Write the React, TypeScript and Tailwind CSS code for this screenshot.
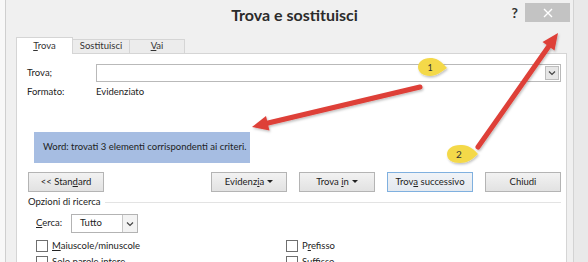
import React from "react";

const font = { fontFamily: "Lato, 'Noto Sans', sans-serif" };

function Btn({ children, w = "w-[76px]", primary }: { children: React.ReactNode; w?: string; primary?: boolean }) {
  return (
    <div
      className={
        w +
        " shrink-0 h-[20px] flex items-center justify-center text-[9.5px] text-[#222] border " +
        (primary
          ? "border-[#7fb0df] bg-gradient-to-b from-[#f0f3f7] to-[#e4e9ef]"
          : "border-[#b4b4b4] bg-gradient-to-b from-[#f2f2f2] to-[#e2e2e2]")
      }
    >
      <span className="whitespace-pre">{children}</span>
    </div>
  );
}

function Caret() {
  return <span className="ml-[3px] mb-[1px] inline-block align-middle w-0 h-0 border-l-[3px] border-r-[3px] border-t-[3px] border-l-transparent border-r-transparent border-t-[#222]" />;
}

function Check({ children }: { children: React.ReactNode }) {
  return (
    <div className="flex items-center gap-[4px] h-[16px]">
      <div className="w-[12px] h-[12px] shrink-0 border border-[#6f6f6f] bg-white" />
      <span className="text-[9.5px] text-[#222]">{children}</span>
    </div>
  );
}

function Chevron() {
  return (
    <svg width="8" height="6" viewBox="0 0 8 6">
      <path d="M1 1.5 L4 4.5 L7 1.5" fill="none" stroke="#444" strokeWidth="1.2" />
    </svg>
  );
}

export default function App() {
  return (
    <div className="w-[588px] h-[262px] overflow-hidden relative bg-[#f0f0f0] flex" style={font}>
      <div className="w-[6px] shrink-0 bg-[#f8f8f8] border-r border-[#cfcfcf]" />
      <div className="flex-1 flex flex-col">
        <div className="h-[37px] shrink-0 relative flex items-center justify-center">
          <span className="text-[16px] font-bold text-[#2b2b2b] mt-[-7px] ml-[10px] leading-none">Trova e sostituisci</span>
          <div className="absolute right-[3px] top-[3px] flex items-start gap-[7px]">
            <span className="text-[14px] font-bold text-[#333] leading-none mt-[3px]">?</span>
            <div className="w-[45px] h-[19px] bg-[#c3c3c3] flex items-center justify-center">
              <svg width="10" height="10" viewBox="0 0 10 10">
                <path d="M1 1 L9 9 M9 1 L1 9" stroke="#fff" strokeWidth="1.4" />
              </svg>
            </div>
          </div>
        </div>
        <div className="ml-[10px] w-[551px] shrink-0 flex flex-col">
          <div className="flex items-end h-[16px] shrink-0 text-[9.5px] text-[#333]">
            <div className="w-[57px] h-[17px] bg-white border border-b-0 border-[#d5d5d5] flex items-center justify-center relative z-10 mb-[-1px]">
              <span><u>T</u>rova</span>
            </div>
            <div className="w-[57px] h-[14px] bg-[#ececec] border border-l-0 border-b-0 border-[#d5d5d5] flex items-center justify-center">
              <span>Sost<u>i</u>tuisci</span>
            </div>
            <div className="w-[55px] h-[14px] bg-[#ececec] border border-l-0 border-b-0 border-[#d5d5d5] flex items-center justify-center">
              <span><u>V</u>ai</span>
            </div>
          </div>
          <div className="bg-white border border-[#d5d5d5] h-[230px] shrink-0 pl-[10px] pr-[5px] pt-[10px] flex flex-col text-[9.5px] text-[#222]">
            <div className="flex items-center h-[18px] shrink-0">
              <span className="w-[69px]">Trova;</span>
              <div className="flex-1 h-[18px] border border-[#b9b9b9] flex items-center justify-end pr-[1px]">
                <div className="w-[14px] h-[14px] bg-[#e6e6e6] border border-[#bdbdbd] flex items-center justify-center">
                  <Chevron />
                </div>
              </div>
            </div>
            <div className="flex items-center h-[14px] shrink-0 mt-[3px]">
              <span className="w-[69px]">Formato:</span>
              <span>Evidenziato</span>
            </div>
            <div className="ml-[7px] mt-[33px] w-[216px] h-[31px] shrink-0 bg-[#a6bde2] flex items-center pl-[9px] text-[9.5px] text-[#1d1d1d]">
              <span>Word: trovati 3 elementi corrispondenti ai criteri.</span>
            </div>
            <div className="flex items-center mt-[9px] ml-[1px] w-[533px] shrink-0">
              <Btn>&lt;&lt; Stan<u>d</u>ard</Btn>
              <div className="flex-1" />
              <div className="flex gap-[12px]">
                <Btn>Evidenz<u>i</u>a<Caret /></Btn>
                <Btn>Trova <u>i</u>n<Caret /></Btn>
                <Btn w="w-[86px]" primary>Trov<u>a</u> successivo</Btn>
                <Btn>Chiudi</Btn>
              </div>
            </div>
            <div className="flex items-center mt-[3px] ml-[1px] w-[533px] h-[14px] shrink-0">
              <span className="text-[9.5px]">Opzioni di ricerca</span>
              <div className="flex-1 ml-[4px] h-px bg-[#e3e3e3]" />
            </div>
            <div className="flex items-center mt-[5px] ml-[9px] h-[19px] shrink-0">
              <span className="w-[35px]"><u>C</u>erca:</span>
              <div className="w-[67px] h-[19px] border border-[#b3b3b3] flex items-center">
                <span className="flex-1 pl-[8px]">Tutto</span>
                <div className="w-[15px] h-[17px] border-l border-[#c6c6c6] bg-[#f3f3f3] flex items-center justify-center">
                  <Chevron />
                </div>
              </div>
            </div>
            <div className="grid grid-cols-[250px_1fr] ml-[9px] mt-[5px] shrink-0">
              <Check><u>M</u>aiuscole/minuscole</Check>
              <Check>P<u>r</u>efisso</Check>
              <Check>Solo parole intere</Check>
              <Check>Suffisso</Check>
            </div>
          </div>
        </div>
      </div>
      <div className="w-[15px] shrink-0 bg-[#e9e9e9] border-l border-[#d3d3d3]" />

      <svg className="absolute inset-0 pointer-events-none" width="588" height="262" viewBox="0 0 588 262">
        <defs>
          <filter id="sh" x="-20%" y="-20%" width="140%" height="140%">
            <feDropShadow dx="1" dy="1.5" stdDeviation="1.2" floodColor="#000" floodOpacity="0.25" />
          </filter>
        </defs>
        <g filter="url(#sh)">
          <line x1="420" y1="87" x2="266" y2="123.5" stroke="#de3f38" strokeWidth="5" strokeLinecap="round" />
          <polygon points="252,127 269.5,130.5 266,116" fill="#de3f38" />
          <line x1="478" y1="147" x2="549" y2="46" stroke="#de3f38" strokeWidth="5" strokeLinecap="round" />
          <polygon points="558,33 554.5,50.5 542.5,42" fill="#de3f38" />
          <path d="M447,68 C440,60 436,58 430,58 C423,58 418,62 418,67 C418,72 423,76 430,76 C437,76 441,72 447,68 Z" fill="#f4d94a" />
          <path d="M478,154 C471,146 466,145 460,145 C452,145 447,149 447,154 C447,160 452,163 460,163 C467,163 472,160 478,154 Z" fill="#f4d94a" />
        </g>
        <text x="430" y="70.5" fontSize="9" textAnchor="middle" fill="#333" fontFamily="Lato, sans-serif">1</text>
        <text x="459" y="158" fontSize="10" textAnchor="middle" fill="#333" fontFamily="Lato, sans-serif">2</text>
      </svg>
    </div>
  );
}
